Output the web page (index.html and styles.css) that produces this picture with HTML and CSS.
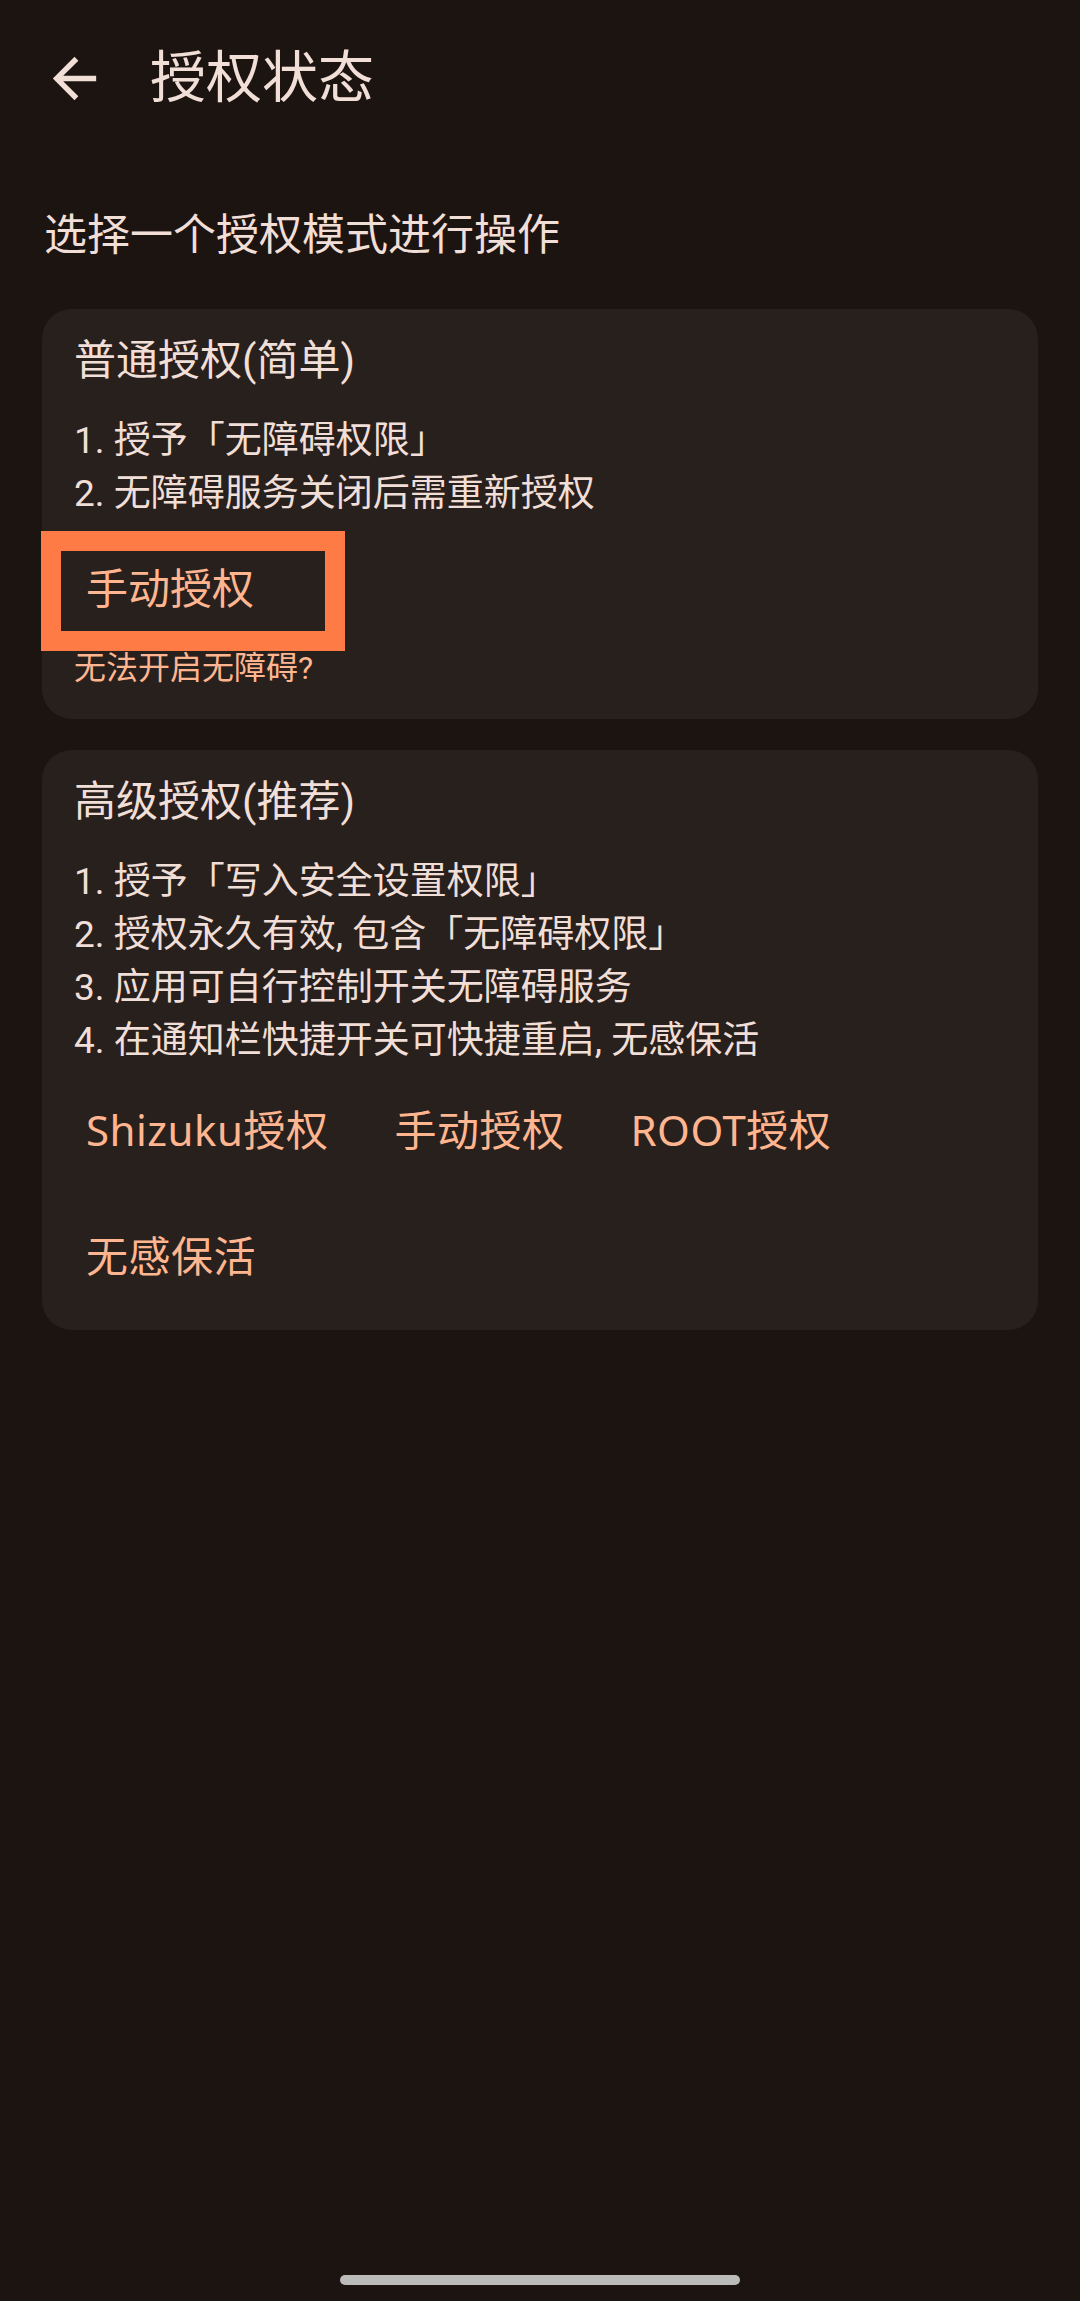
FILE: index.html
```html
<!DOCTYPE html>
<html lang="zh-CN">
<head>
<meta charset="utf-8">
<title>授权状态</title>
<link rel="stylesheet" href="styles.css">
</head>
<body>
<div class="screen">
  <header class="topbar">
    <svg class="back" viewBox="0 0 24 24" aria-hidden="true"><path d="M20 11H7.83l5.59-5.59L12 4l-8 8 8 8 1.41-1.41L7.83 13H20v-2z"/></svg>
    <h1 class="title">授权状态</h1>
  </header>

  <p class="subtitle">选择一个授权模式进行操作</p>

  <section class="card">
    <h2 class="card-title">普通授权(简单)</h2>
    <ul class="items">
      <li>1. 授予「无障碍权限」</li>
      <li>2. 无障碍服务关闭后需重新授权</li>
    </ul>
    <div class="highlight-btn"><span>手动授权</span></div>
    <p class="help">无法开启无障碍?</p>
  </section>

  <section class="card card2">
    <h2 class="card-title">高级授权(推荐)</h2>
    <ul class="items">
      <li>1. 授予「写入安全设置权限」</li>
      <li>2. 授权永久有效, 包含「无障碍权限」</li>
      <li>3. 应用可自行控制开关无障碍服务</li>
      <li>4. 在通知栏快捷开关可快捷重启, 无感保活</li>
    </ul>
    <div class="actions">
      <span class="text-btn">Shizuku授权</span>
      <span class="text-btn">手动授权</span>
      <span class="text-btn">ROOT授权</span>
      <span class="text-btn">无感保活</span>
    </div>
  </section>

  <div class="nav-handle"></div>
</div>
</body>
</html>
```

FILE: styles.css
```css
* { box-sizing: border-box; }
html, body {
  margin: 0;
  padding: 0;
  width: 1080px;
  height: 2301px;
  overflow: hidden;
  background: #1c1411;
}
body {
  font-family: Roboto, "Noto Sans CJK SC", sans-serif;
  color: #f0ded7;
}
.screen {
  position: relative;
  width: 1080px;
  height: 2301px;
}
.topbar {
  display: flex;
  align-items: center;
  height: 156px;
  padding-left: 42px;
}
.back {
  width: 65px;
  height: 65px;
  fill: #f0ded7;
  flex: none;
}
.title {
  margin: 0 0 0 43px;
  font-size: 56px;
  font-weight: 400;
  line-height: 1;
}
.subtitle {
  margin: 49px 0 0 44px;
  font-size: 43px;
  line-height: 60px;
}
.card {
  margin: 44px 42px 0;
  background: #28201c;
  border-radius: 30px;
  padding: 22px 32px 34px;
}
.card2 {
  margin-top: 31px;
  padding-bottom: 24px;
}
.card-title {
  margin: 0;
  font-size: 42px;
  font-weight: 400;
  line-height: 60px;
}
.items {
  list-style: none;
  margin: 23px 0 0;
  padding: 0;
  font-size: 37px;
  line-height: 53px;
}
.highlight-btn {
  margin: 11px 0 0 -33px;
  width: 304px;
  height: 120px;
  border: 20px solid #ff7b45;
  display: flex;
  align-items: center;
  padding: 0 0 12px 25px;
  font-size: 42px;
  color: #ffb690;
}
.help {
  margin: 0;
  font-size: 32px;
  line-height: 34px;
  color: #ffb690;
}
.actions {
  display: flex;
  flex-wrap: wrap;
  column-gap: 42px;
  row-gap: 21px;
  margin-top: 8px;
}
.text-btn {
  display: flex;
  align-items: center;
  height: 105px;
  padding: 0 12px;
  font-family: "Noto Sans", "Noto Sans CJK SC", sans-serif;
  font-size: 42px;
  letter-spacing: 0.5px;
  color: #ffb690;
}
.nav-handle {
  position: absolute;
  left: 340px;
  top: 2275px;
  width: 400px;
  height: 10px;
  border-radius: 5px;
  background: #bbbbba;
}
```
